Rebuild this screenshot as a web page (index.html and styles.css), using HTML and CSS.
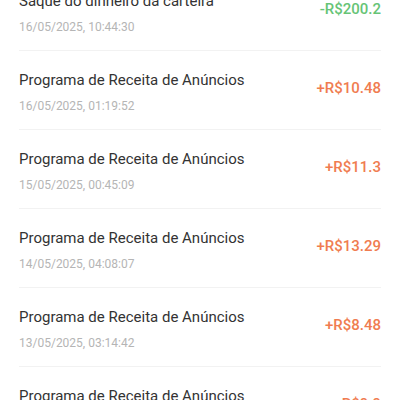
FILE: index.html
```html
<!DOCTYPE html>
<html lang="pt">
  <head>
    <meta charset="UTF-8" />
    <meta name="viewport" content="width=device-width, initial-scale=1.0" />
    <title>Extrato</title>
    <link rel="stylesheet" href="styles.css">
  </head>

  <body>
    <ul class="records">
      <li class="record">
        <div class="record-info">
          <div class="record-title">Saque do dinheiro da carteira</div>
          <div class="record-date">16/05/2025, 10:44:30</div>
        </div>
        <div class="record-amount minus">-R$200.2</div>
      </li>
      <li class="record">
        <div class="record-info">
          <div class="record-title">Programa de Receita de Anúncios</div>
          <div class="record-date">16/05/2025, 01:19:52</div>
        </div>
        <div class="record-amount">+R$10.48</div>
      </li>
      <li class="record">
        <div class="record-info">
          <div class="record-title">Programa de Receita de Anúncios</div>
          <div class="record-date">15/05/2025, 00:45:09</div>
        </div>
        <div class="record-amount">+R$11.3</div>
      </li>
      <li class="record">
        <div class="record-info">
          <div class="record-title">Programa de Receita de Anúncios</div>
          <div class="record-date">14/05/2025, 04:08:07</div>
        </div>
        <div class="record-amount">+R$13.29</div>
      </li>
      <li class="record">
        <div class="record-info">
          <div class="record-title">Programa de Receita de Anúncios</div>
          <div class="record-date">13/05/2025, 03:14:42</div>
        </div>
        <div class="record-amount">+R$8.48</div>
      </li>
      <li class="record">
        <div class="record-info">
          <div class="record-title">Programa de Receita de Anúncios</div>
          <div class="record-date">12/05/2025, 02:31:16</div>
        </div>
        <div class="record-amount">+R$9.9</div>
      </li>
    </ul>
  </body>
</html>
```

FILE: styles.css
```css
body {
  margin: 0;
  background: white;
  font-family: Roboto, "Noto Sans", sans-serif;
  overflow: hidden;
}

.records {
  margin: -28px 0 0 0;
  padding: 0;
  list-style-type: none;
}

.record {
  display: flex;
  justify-content: space-between;
  align-items: flex-start;
  margin: 0 19px;
  padding: 19px 0 15px 0;
  border-bottom: solid 1px #f2f2f2;
}

.record-title {
  height: 20px;
  line-height: 20px;
  font-size: 15px;
  color: #333333;
}

.record-date {
  margin-top: 8px;
  height: 16px;
  line-height: 16px;
  font-size: 12px;
  color: #b5b5b5;
}

.record-amount {
  margin-top: 8px;
  line-height: 20px;
  font-size: 15px;
  font-weight: 500;
  color: #f07c50;
}

.record-amount.minus {
  color: #66c476;
}
```
